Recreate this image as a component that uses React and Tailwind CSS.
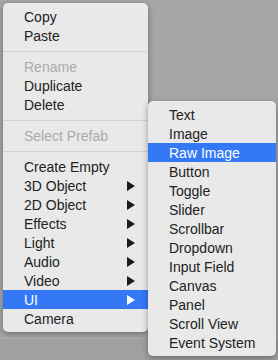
const mainItems = [
  { label: "Copy" },
  { label: "Paste" },
  { sep: true },
  { label: "Rename", disabled: true },
  { label: "Duplicate" },
  { label: "Delete" },
  { sep: true },
  { label: "Select Prefab", disabled: true },
  { sep: true },
  { label: "Create Empty" },
  { label: "3D Object", sub: true },
  { label: "2D Object", sub: true },
  { label: "Effects", sub: true },
  { label: "Light", sub: true },
  { label: "Audio", sub: true },
  { label: "Video", sub: true },
  { label: "UI", sub: true, active: true },
  { label: "Camera" },
];

const uiItems = [
  "Text",
  "Image",
  "Raw Image",
  "Button",
  "Toggle",
  "Slider",
  "Scrollbar",
  "Dropdown",
  "Input Field",
  "Canvas",
  "Panel",
  "Scroll View",
  "Event System",
];

function Arrow({ active }) {
  return (
    <svg width="8" height="10" viewBox="0 0 8 10" className="shrink-0">
      <path d="M0 0 L8 5 L0 10 Z" fill={active ? "#ffffff" : "#1c1c1c"} />
    </svg>
  );
}

function Row({ item }) {
  if (item.sep) {
    return (
      <div className="h-[12px] flex items-center">
        <div className="h-px w-full bg-[#d3d3d3]" />
      </div>
    );
  }
  const color = item.active
    ? "bg-[#3478f6] text-white"
    : item.disabled
    ? "text-[#a9a9a9]"
    : "text-[#222222]";
  return (
    <div className={`h-[19px] flex items-center justify-between pl-[21px] pr-[13px] ${color}`}>
      <span className="leading-none">{item.label}</span>
      {item.sub && <Arrow active={item.active} />}
    </div>
  );
}

export default function App() {
  return (
    <div
      className="relative w-[278px] h-[360px] overflow-hidden bg-[#a6a6a6] text-[14px]"
      style={{ fontFamily: '"Liberation Sans", Arial, sans-serif' }}
    >
      <div className="absolute left-0 right-0 bottom-0 h-[22px] bg-[#a0a0a0] border-t border-[#b0b0b0]" />

      {/* main context menu */}
      <div className="absolute left-[3px] top-[3px] w-[145px] py-[4px] rounded-[5px] bg-[#e9e9e9] shadow-[0_2px_6px_rgba(0,0,0,0.35)]">
        {mainItems.map((item, i) => (
          <Row key={i} item={item} />
        ))}
      </div>

      {/* UI submenu */}
      <div className="absolute left-[148px] top-[101px] w-[128px] py-[4px] rounded-[5px] bg-[#e9e9e9] shadow-[0_2px_6px_rgba(0,0,0,0.35)]">
        {uiItems.map((label) => (
          <Row key={label} item={{ label, active: label === "Raw Image" }} />
        ))}
      </div>
    </div>
  );
}
